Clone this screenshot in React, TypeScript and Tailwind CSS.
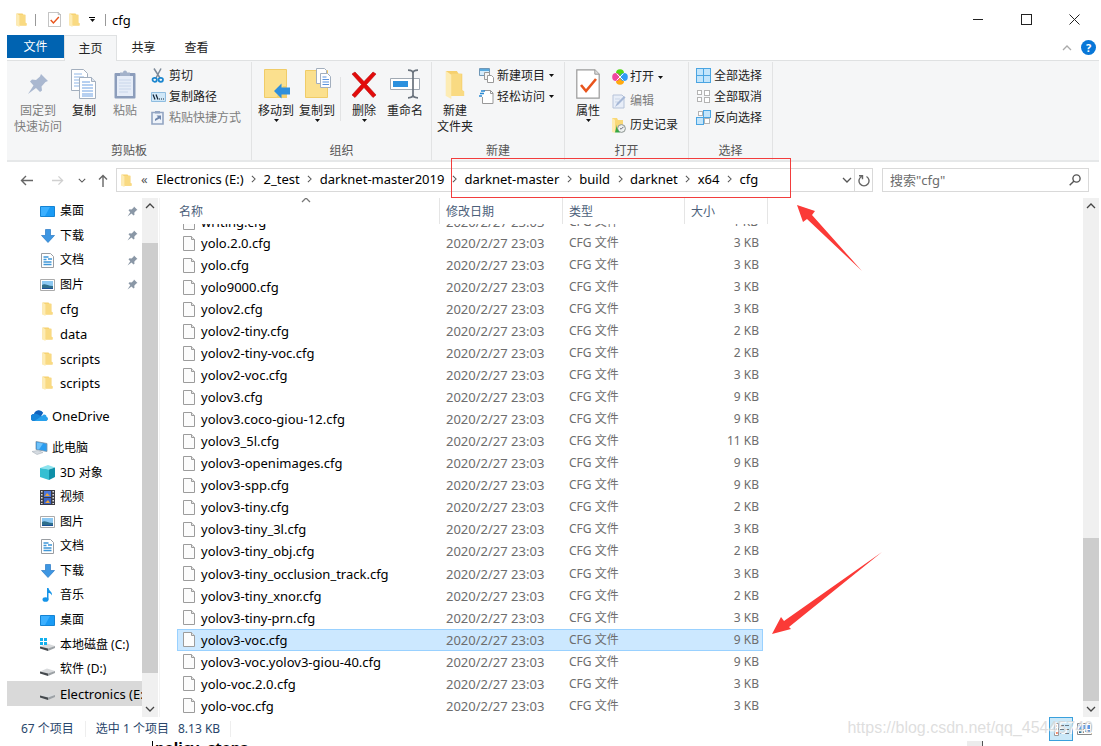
import React from 'react';

type IconProps = { className?: string };

function Folder({ className = 'w-[11px] h-[14px]' }: IconProps) {
  return (
    <svg className={className} viewBox="0 0 22 30" preserveAspectRatio="none">
      <path d="M1 1h12l2 3h4v17l2 1v5H9l-8 0z" fill="#f6d06e" />
      <path d="M7 4h11v17l3 1v5H7z" fill="#f9da82" />
      <path d="M1 1l6 4v25l-6-3z" fill="#fdecb4" />
    </svg>
  );
}

function CheckDoc({ className = 'w-[13px] h-[15px]' }: IconProps) {
  return (
    <svg className={className} viewBox="0 0 24 30" preserveAspectRatio="none">
      <path d="M.8.8h18l4.4 4.4v24H.8z" fill="#fff" stroke="#9a9a9a" strokeWidth="1.2" />
      <path d="M18.8.8v4.4h4.4" fill="#ddd" stroke="#9a9a9a" strokeWidth="1" />
      <path d="M5 16l5 6 10-12" fill="none" stroke="#e8541c" strokeWidth="2.6" />
    </svg>
  );
}

function Caret() {
  return (
    <svg className="w-[5px] h-[3px]" viewBox="0 0 5 3">
      <path d="M0 0h5L2.5 3z" fill="#111" />
    </svg>
  );
}

function Chevron({ className = 'w-[6px] h-[10px]', d = 'M1 1l4 4-4 4', box = '0 0 6 10' }: IconProps & { d?: string; box?: string }) {
  return (
    <svg className={className} viewBox={box} fill="none" stroke="currentColor" strokeWidth="1.3">
      <path d={d} />
    </svg>
  );
}

function Pin({ className = 'w-[12px] h-[12px]', color = '#8a97a6' }: IconProps & { color?: string }) {
  return (
    <svg className={className} viewBox="0 0 22 22">
      <path d="M14 1l7 7-2.500 1-4 4.500.5 4-2 1.500-4-4L1 21l5.500-8.500-3.500-4 2-2 4 .5L13 3.500z" fill={color} />
    </svg>
  );
}

function CopyPages({ className = 'w-[26px] h-[30px]' }: IconProps) {
  return (
    <svg className={className} viewBox="0 0 26 30">
      <path d="M.5.500h12l4 4v17H.5z" fill="#fff" stroke="#a3afbe" />
      <path d="M3 5h8M3 8h10M3 11h10M3 14h6M3 17h6" stroke="#8fb6e6" />
      <path d="M8.500 8.500h12l4 4v17h-16z" fill="#fff" stroke="#a3afbe" />
      <path d="M20.500 8.500v4h4" fill="#dde5ef" stroke="#a3afbe" />
      <path d="M11 13h8M11 16h11M11 19h11M11 22h11M11 25h11M11 27h11" stroke="#6fa1e2" />
    </svg>
  );
}

function Clipboard() {
  return (
    <svg className="w-[22px] h-[30px]" viewBox="0 0 22 30">
      <rect x=".5" y="4" width="21" height="25.500" rx="1" fill="#8c9dbb" />
      <path d="M3 7h16v20H3z" fill="#e6edf8" />
      <path d="M5 11h12M5 14h12M5 17h12M5 20h12M5 23h9" stroke="#c9d6ea" />
      <path d="M6 7V3.500h3a2 2 0 014 0h3V7z" fill="#a3b2ca" />
    </svg>
  );
}

function Scissors() {
  return (
    <svg className="w-[14px] h-[15px]" viewBox="0 0 14 15" fill="none">
      <path d="M3 .5l6 9.500M10 .5L5 10" stroke="#7d8a99" strokeWidth="1.500" />
      <ellipse cx="3.700" cy="11.800" rx="2.200" ry="2" stroke="#1a86cf" strokeWidth="1.700" />
      <ellipse cx="9.800" cy="11.800" rx="2.200" ry="2" stroke="#1a86cf" strokeWidth="1.700" />
    </svg>
  );
}

function CopyPath() {
  return (
    <svg className="w-[15px] h-[10px]" viewBox="0 0 15 10">
      <path d="M.5.500h14v9H.5z" fill="#cfe7f8" stroke="#8fbde0" />
      <path d="M2 2.500l2 5M5 2.500l2 5M8 7h1M10 7h1M12 7h1" stroke="#123" strokeWidth="1.200" />
    </svg>
  );
}

function PasteShortcut() {
  return (
    <svg className="w-[13px] h-[15px]" viewBox="0 0 13 15">
      <path d="M1 2.500h11v11.500H1z" fill="#eef3fa" stroke="#93a5c2" strokeWidth="1.600" />
      <path d="M4 1h5v2.500H4z" fill="#93a5c2" />
      <path d="M4 11V9l3-2-1.500-1.500H10v4.500L8.500 8.500z" fill="#7087ad" />
    </svg>
  );
}

function MoveTo() {
  return (
    <svg className="w-[28px] h-[32px]" viewBox="0 0 28 32">
      <path d="M2.500 1.500h22v28h-22z" fill="#fbe08e" stroke="#f0cc68" />
      <path d="M21 18h4v12H14z" fill="#f3cf6d" />
      <path d="M12 23l7.500-7.500v4H28v7h-8.500v4z" fill="#2f8fdc" />
    </svg>
  );
}

function CopyTo() {
  return (
    <svg className="w-[28px] h-[32px]" viewBox="0 0 28 32">
      <path d="M2.500 2.500h22v27h-22z" fill="#fbe08e" stroke="#f0cc68" />
      <path d="M13.500.500h8l2 2v13h-10z" fill="#fff" stroke="#a3afbe" />
      <path d="M17.500 5.500h7l3 3v11h-10z" fill="#fff" stroke="#a3afbe" />
      <path d="M19.500 9h4M19.500 11.500h6.500M19.500 14h6.500M19.500 16.500h6.500" stroke="#5b93dd" />
    </svg>
  );
}

function Delete() {
  return (
    <svg className="w-[26px] h-[27px]" viewBox="0 0 26 27">
      <path d="M1 3l3-2 9 9.500L22 1l3 2-9.500 10.500L25 24l-3 2.500-9-10-9 10L1 24l9.500-10.500z" fill="#e30b0b" stroke="#b80c0c" strokeWidth=".6" />
    </svg>
  );
}

function Rename() {
  return (
    <svg className="w-[30px] h-[30px]" viewBox="0 0 30 30">
      <path d="M.5 9.500h29v11H.5z" fill="#fff" stroke="#a0a9b3" />
      <path d="M3 12h15v6H3z" fill="#2b90de" />
      <path d="M18 1.200c3 0 5 .8 5 3v21.600c0 2.200-2 3-5 3M28 1.200c-3 0-5 .8-5 3v21.600c0 2.200 2 3 5 3" fill="none" stroke="#6a737d" strokeWidth="1.700" />
    </svg>
  );
}

function NewItem() {
  return (
    <svg className="w-[15px] h-[15px]" viewBox="0 0 15 15">
      <path d="M.5.500h10v7H.5z" fill="#d6ecfb" stroke="#6f97b6" />
      <path d="M1 1h9v2H1z" fill="#5aa9dd" />
      <path d="M5.500 4.500h5v7h-5z" fill="#f4f4f4" stroke="#999" />
      <path d="M8.500 7.500h4l2 2v5h-6z" fill="#fff" stroke="#999" />
    </svg>
  );
}

function EasyAccess() {
  return (
    <svg className="w-[15px] h-[15px]" viewBox="0 0 15 15">
      <path d="M4.500 1.500h7l2.500 2.500v10.500H3.500V8" fill="#fff" stroke="#999" />
      <path d="M11.500 1.500v3H14" fill="none" stroke="#999" />
      <path d="M2 2h4M1 4.500h4M0 7h3" stroke="#2c8bd4" strokeWidth="1.400" />
    </svg>
  );
}

function OpenIcon() {
  return (
    <svg className="w-4 h-4" viewBox="0 0 16 16">
      <ellipse cx="8" cy="4" rx="4" ry="3.800" fill="#53d616" />
      <ellipse cx="8" cy="12" rx="4" ry="3.800" fill="#ffa90f" />
      <ellipse cx="4" cy="8" rx="3.800" ry="4" fill="#f0469f" />
      <ellipse cx="12" cy="8" rx="3.800" ry="4" fill="#2f9cf4" />
      <path d="M4.500 4.500l7 7M11.500 4.500l-7 7" stroke="#fff" strokeWidth="1" />
    </svg>
  );
}

function EditIcon() {
  return (
    <svg className="w-[14px] h-[15px]" viewBox="0 0 14 15">
      <path d="M1 1h9l2 2v11H1z" fill="#e8eef8" stroke="#b6c3d9" />
      <path d="M3 5h5M3 8h3" stroke="#c9d5e7" />
      <path d="M3 13l2-4 7-7 1.500 1.500-7 7z" fill="#a6b8d6" />
    </svg>
  );
}

function HistoryIcon() {
  return (
    <svg className="w-[14px] h-[15px]" viewBox="0 0 14 15">
      <path d="M0 0h5l1 2h5v12H0z" fill="#f9d877" />
      <path d="M0 0l3 2v13l-3-1z" fill="#fdebb0" />
      <circle cx="9.500" cy="10.500" r="3.900" fill="#eef1f0" stroke="#8c9490" />
      <path d="M9.500 10.800l2-2M9.500 10.800H8" fill="none" stroke="#667" />
      <path d="M5 6.500C4.500 9.500 5.500 12 8 14.500H3z" fill="#35a845" />
    </svg>
  );
}

// x, y, side, filled
const squareSets: Record<string, [number, number, number, boolean][]> = {
  all: [
    [0, 0, 7, true],
    [7, 0, 7, true],
    [0, 7, 7, true],
    [7, 7, 7, true],
  ],
  none: [
    [1, 1, 4, false],
    [8, 1, 5, false],
    [1, 8, 4, false],
    [8, 8, 5, false],
  ],
  invert: [
    [2, 1, 4, false],
    [8, 8, 5, false],
    [7, 0, 7, true],
    [0, 7, 7, true],
  ],
};

function Squares({ kind }: { kind: string }) {
  return (
    <svg className="w-[15px] h-[15px]" viewBox="0 0 15 15">
      {squareSets[kind].map(([x, y, side, on]) => (
        <rect
          key={`${x}-${y}`}
          x={x + 0.5}
          y={y + 0.5}
          width={side}
          height={side}
          fill={on ? '#c3e5fb' : '#fff'}
          stroke={on ? '#4ba5e2' : '#b3b3b3'}
        />
      ))}
    </svg>
  );
}

function FileIcon() {
  return (
    <svg className="w-3 h-[15px] shrink-0" viewBox="0 0 12 15">
      <path d="M.5.500h8l3 3v11H.5z" fill="#fcfcfc" stroke="#9c9c9c" />
      <path d="M8.500.500v3h3" fill="#e4e4e4" stroke="#9c9c9c" />
    </svg>
  );
}

function Monitor() {
  return (
    <svg className="w-[15px] h-[11px]" viewBox="0 0 15 11">
      <path d="M.5.500h14v10H.5z" fill="#1a9bf5" stroke="#1583d3" />
      <path d="M1 1h9L5 10H1z" fill="#3cb0ff" />
    </svg>
  );
}

function Download() {
  return (
    <svg className="w-[14px] h-[14px]" viewBox="0 0 14 14">
      <path d="M4.500.500h5v6h4L7 13.500.500 6.500h4z" fill="#3d96e2" stroke="#2a78c4" strokeWidth=".7" />
    </svg>
  );
}

function Doc() {
  return (
    <svg className="w-[13px] h-[15px]" viewBox="0 0 13 15">
      <path d="M.5.500h9l3 3v11H.5z" fill="#fff" stroke="#999da2" />
      <path d="M2.500 4h5M7 6h4M2.500 6.500h3M2.500 9h8M2.500 11.500h8" stroke="#3f97d8" strokeWidth="1.300" />
    </svg>
  );
}

function Picture() {
  return (
    <svg className="w-[15px] h-[12px]" viewBox="0 0 15 12">
      <path d="M.5.500h14v11H.5z" fill="#fff" stroke="#ababab" />
      <path d="M2 2h11v8H2z" fill="#8cc8f2" />
      <path d="M2 6c3-2 5 1 11 1v3H2z" fill="#2f6f8c" />
      <path d="M2 9h11v1H2z" fill="#1a4f96" />
    </svg>
  );
}

function Cloud() {
  return (
    <svg className="w-[17px] h-[11px]" viewBox="0 0 17 11">
      <path d="M3.500 11A3.500 3.500 0 013 4a5 5 0 019.200-1.200L9 8z" fill="#0f62bd" />
      <path d="M3.500 11a3.500 3.500 0 01-.5-7c2.500-.8 4.500.5 6.500 2l5.500 1c2.500 1 2 4-1 4z" fill="#1685d9" />
      <path d="M3.500 11l8-5.500c1-1.800 4-1 4 1.200 2 .8 2 4.300-1.500 4.300z" fill="#28a1ec" />
    </svg>
  );
}

function ThisPc() {
  return (
    <svg className="w-[17px] h-[14px]" viewBox="0 0 17 14">
      <path d="M5 .500l11 2v8l-11-2z" fill="#2b9df0" stroke="#7f93a5" strokeWidth=".8" />
      <path d="M6 1.500l6 1-4 6-2-.5z" fill="#6ec2fa" />
      <path d="M1 10.500l6-1 5 2-6 2z" fill="#d5dbe1" stroke="#aab3bc" strokeWidth=".6" />
    </svg>
  );
}

function Cube() {
  return (
    <svg className="w-[15px] h-[15px]" viewBox="0 0 15 15">
      <path d="M0 3l8-3 7 2.500-6 2z" fill="#8de3ee" />
      <path d="M0 3l9 1.500V15l-9-3z" fill="#35bfd2" />
      <path d="M9 4.500l6-2V12l-6 3z" fill="#0f90a8" />
    </svg>
  );
}

function Video() {
  return (
    <svg className="w-[15px] h-[15px]" viewBox="0 0 15 15">
      <path d="M0 0h15v15H0z" fill="#3b3b44" />
      <path d="M4 1h7v6H4z" fill="#4c76dd" />
      <path d="M4 8h7v6H4z" fill="#3a63c8" />
      <path d="M5 6l2-3 3 3zM5 13l3-3 2 3z" fill="#efa53a" />
      <path d="M1.800 1v13M13.200 1v13" stroke="#e6e6e6" strokeWidth="1.500" strokeDasharray="1.500 1.500" />
    </svg>
  );
}

function Music() {
  return (
    <svg className="w-[11px] h-[14px]" viewBox="0 0 11 14">
      <ellipse cx="3.500" cy="11.500" rx="3" ry="2.300" fill="#1594e8" />
      <path d="M5 0h1.500c.5 3 4 3.500 3.500 7.500C9 5.500 7.500 5 6.500 5v6.500H5z" fill="#1594e8" />
    </svg>
  );
}

function Drive({ system }: { system?: boolean }) {
  return (
    <svg className="w-[15px] h-[13px]" viewBox="0 0 15 13">
      <path d="M0 8.500l7-3 8 2.500-7 3z" fill="#d8dadc" />
      <path d="M0 8.500l8 2V13l-8-2.500z" fill="#44494d" />
      <path d="M8 10.500l7-2.500v2L8 13z" fill="#9da2a6" />
      {system && <path d="M0 0h3v3H0zM4 0h3v3H4zM0 4h3v3H0zM4 4h3v3H4z" fill="#12b0ee" />}
    </svg>
  );
}

type BigProps = { icon: React.ReactNode; lines: string[]; width: string; muted?: boolean; caret?: boolean };

function BigButton({ icon, lines, width, muted, caret }: BigProps) {
  return (
    <button className={`flex flex-col items-center shrink-0 ${width} ${muted ? 'text-[#7d7d7d]' : 'text-[#222]'}`}>
      <span className="h-[38px] flex items-center justify-center">{icon}</span>
      {lines.map((line) => (
        <span key={line} className="leading-4 whitespace-nowrap">
          {line}
        </span>
      ))}
      {caret && <Caret />}
    </button>
  );
}

type SmallProps = { icon: React.ReactNode; label: string; muted?: boolean; caret?: boolean; tall?: boolean };

function SmallButton({ icon, label, muted, caret, tall }: SmallProps) {
  return (
    <button className={`flex items-center whitespace-nowrap ${tall ? 'h-6' : 'h-[21px]'} ${muted ? 'text-[#7d7d7d]' : 'text-[#222]'}`}>
      <span className="w-[18px] flex shrink-0">{icon}</span>
      <span className="mr-1">{label}</span>
      {caret && <Caret />}
    </button>
  );
}

function Group({ title, width, inset = 'pl-[3px]', children }: { title: string; width: string; inset?: string; children: React.ReactNode }) {
  return (
    <section className={`flex flex-col shrink-0 border-r border-[#e2e3e4] ${width}`}>
      <div className={`flex flex-1 pt-[3px] ${inset}`}>{children}</div>
      <h2 className="h-[18px] leading-[18px] text-center text-[#555]">{title}</h2>
    </section>
  );
}

type NavItem = { icon: React.ReactNode; label: string; top?: boolean; pinned?: boolean; latin?: boolean; active?: boolean };

const navItems: NavItem[] = [
  { icon: <Monitor />, label: '桌面', pinned: true },
  { icon: <Download />, label: '下载', pinned: true },
  { icon: <Doc />, label: '文档', pinned: true },
  { icon: <Picture />, label: '图片', pinned: true },
  { icon: <Folder />, label: 'cfg', latin: true },
  { icon: <Folder />, label: 'data', latin: true },
  { icon: <Folder />, label: 'scripts', latin: true },
  { icon: <Folder />, label: 'scripts', latin: true },
  { icon: <Cloud />, label: 'OneDrive', top: true, latin: true },
  { icon: <ThisPc />, label: '此电脑', top: true },
  { icon: <Cube />, label: '3D 对象' },
  { icon: <Video />, label: '视频' },
  { icon: <Picture />, label: '图片' },
  { icon: <Doc />, label: '文档' },
  { icon: <Download />, label: '下载' },
  { icon: <Music />, label: '音乐' },
  { icon: <Monitor />, label: '桌面' },
  { icon: <Drive system />, label: '本地磁盘 (C:)' },
  { icon: <Drive />, label: '软件 (D:)' },
  { icon: <Drive />, label: 'Electronics (E:)', latin: true, active: true },
];

const files: [string, number][] = [
  ['yolo.2.0.cfg', 3],
  ['yolo.cfg', 3],
  ['yolo9000.cfg', 3],
  ['yolov2.cfg', 3],
  ['yolov2-tiny.cfg', 2],
  ['yolov2-tiny-voc.cfg', 2],
  ['yolov2-voc.cfg', 3],
  ['yolov3.cfg', 9],
  ['yolov3.coco-giou-12.cfg', 9],
  ['yolov3_5l.cfg', 11],
  ['yolov3-openimages.cfg', 9],
  ['yolov3-spp.cfg', 9],
  ['yolov3-tiny.cfg', 2],
  ['yolov3-tiny_3l.cfg', 3],
  ['yolov3-tiny_obj.cfg', 2],
  ['yolov3-tiny_occlusion_track.cfg', 3],
  ['yolov3-tiny_xnor.cfg', 2],
  ['yolov3-tiny-prn.cfg', 3],
  ['yolov3-voc.cfg', 9],
  ['yolov3-voc.yolov3-giou-40.cfg', 9],
  ['yolo-voc.2.0.cfg', 3],
  ['yolo-voc.cfg', 3],
];

const crumbs = ['Electronics (E:)', '2_test', 'darknet-master2019', 'darknet-master', 'build', 'darknet', 'x64', 'cfg'];

const up = 'M1 6l4-4 4 4';
const down = 'M1 2l4 4 4-4';

function TitleBar() {
  return (
    <header className="flex items-center h-[35px] pt-1 pr-px shrink-0">
      <div className="flex items-center pl-[9px]">
        <Folder />
        <span className="w-px h-3 bg-[#999] mx-2" />
        <button aria-label="属性" className="ml-1">
          <CheckDoc />
        </button>
        <button aria-label="新建文件夹" className="ml-2">
          <Folder />
        </button>
        <button aria-label="自定义快速访问工具栏" className="ml-[9px] mr-[10px] flex flex-col items-center gap-px text-black">
          <span className="w-[6px] h-px bg-current" />
          <Caret />
        </button>
        <span className="w-px h-3 bg-[#999]" />
      </div>
      <h1 className="pl-[6px] text-[13px] text-black">cfg</h1>
      <div className="ml-auto flex text-[#222]">
        <button aria-label="最小化" className="w-12 h-8 flex items-center justify-center">
          <span className="w-[10px] h-px bg-current" />
        </button>
        <button aria-label="最大化" className="w-12 h-8 flex items-center justify-center">
          <span className="w-[11px] h-[11px] border border-current" />
        </button>
        <button aria-label="关闭" className="w-12 h-8 flex items-center justify-center">
          <svg className="w-[11px] h-[11px]" viewBox="0 0 11 11" stroke="currentColor">
            <path d="M.5.500l10 10M10.500.500l-10 10" />
          </svg>
        </button>
      </div>
    </header>
  );
}

function Tabs() {
  return (
    <div className="flex items-start h-[26px] shrink-0 border-b border-[#dfe1e2]">
      <button className="w-[57px] h-[23px] bg-[#0063b1] text-white">文件</button>
      <button className="w-[53px] h-[26px] bg-[#f5f6f7] border border-b-0 border-[#dfe1e2] text-[#222]">主页</button>
      <button className="w-[53px] h-[25px] text-[#222]">共享</button>
      <button className="w-[53px] h-[25px] text-[#222]">查看</button>
      <div className="ml-auto flex items-center gap-[9px] h-[25px] pr-[3px]">
        <button aria-label="最小化功能区" className="text-[#aaa]">
          <Chevron className="w-[10px] h-[8px]" box="0 0 10 8" d={up} />
        </button>
        <button className="w-[15px] h-[15px] rounded-full bg-[#0877d8] text-white text-[11px] leading-[15px] font-bold">?</button>
      </div>
    </div>
  );
}

function Ribbon() {
  return (
    <div className="flex h-[101px] shrink-0 bg-[#f5f6f7] border-b-2 border-[#e6e8e9] pt-px">
      <Group title="剪贴板" width="w-[245px]" inset="pl-[6px]">
        <BigButton icon={<Pin className="w-[22px] h-[22px]" color="#aab8d0" />} lines={['固定到', '快速访问']} width="w-[50px]" muted />
        <BigButton icon={<CopyPages />} lines={['复制']} width="w-[42px]" />
        <BigButton icon={<Clipboard />} lines={['粘贴']} width="w-10" muted />
        <div className="pl-[6px]">
          <SmallButton icon={<Scissors />} label="剪切" />
          <SmallButton icon={<CopyPath />} label="复制路径" />
          <SmallButton icon={<PasteShortcut />} label="粘贴快捷方式" muted />
        </div>
      </Group>
      <Group title="组织" width="w-[180px]">
        <BigButton icon={<MoveTo />} lines={['移动到']} width="w-[42px]" caret />
        <BigButton icon={<CopyTo />} lines={['复制到']} width="w-10" caret />
        <span className="w-px h-11 mt-3 mx-[3px] bg-[#e2e3e4]" />
        <BigButton icon={<Delete />} lines={['删除']} width="w-10" caret />
        <BigButton icon={<Rename />} lines={['重命名']} width="w-[42px]" />
      </Group>
      <Group title="新建" width="w-[133px]">
        <BigButton icon={<Folder className="w-[20px] h-[29px]" />} lines={['新建', '文件夹']} width="w-10" />
        <div className="pl-1">
          <SmallButton icon={<NewItem />} label="新建项目" caret />
          <SmallButton icon={<EasyAccess />} label="轻松访问" caret />
        </div>
      </Group>
      <Group title="打开" width="w-[124px]">
        <BigButton icon={<CheckDoc className="w-[24px] h-[30px]" />} lines={['属性']} width="w-10" caret />
        <div className="pl-1">
          <SmallButton icon={<OpenIcon />} label="打开" caret tall />
          <SmallButton icon={<EditIcon />} label="编辑" muted tall />
          <SmallButton icon={<HistoryIcon />} label="历史记录" tall />
        </div>
      </Group>
      <Group title="选择" width="w-[84px]" inset="pl-[7px]">
        <div>
          <SmallButton icon={<Squares kind="all" />} label="全部选择" />
          <SmallButton icon={<Squares kind="none" />} label="全部取消" />
          <SmallButton icon={<Squares kind="invert" />} label="反向选择" />
        </div>
      </Group>
    </div>
  );
}

function AddressBar() {
  return (
    <div className="flex items-center h-9 shrink-0 pl-[13px] pr-[10px] text-[13px] text-[#555]">
      <button aria-label="后退">
        <svg className="w-[13px] h-[11px]" viewBox="0 0 13 11" fill="none" stroke="#666" strokeWidth="1.400">
          <path d="M6 1L1.500 5.500 6 10M1.500 5.500H13" />
        </svg>
      </button>
      <button aria-label="前进" className="ml-[19px]">
        <svg className="w-[12px] h-[11px]" viewBox="0 0 13 11" fill="none" stroke="#d0d0d0" strokeWidth="1.400">
          <path d="M7 1l4.500 4.500L7 10M11.500 5.500H0" />
        </svg>
      </button>
      <button aria-label="最近浏览的位置" className="ml-[14px]">
        <Chevron className="w-2 h-[7px]" box="0 0 10 8" d={down} />
      </button>
      <button aria-label="上移" className="ml-3">
        <svg className="w-[10px] h-[13px]" viewBox="0 0 10 13" fill="none" stroke="#666" strokeWidth="1.400">
          <path d="M1 5.500l4-4 4 4M5 1.500V13" />
        </svg>
      </button>
      <div className="ml-2 flex flex-1 items-center h-6 border border-[#d9d9d9] pl-1">
        <Folder className="w-[11px] h-[13px]" />
        <span className="w-[24px] pl-[9px] pb-[2px]">«</span>
        <nav className="flex items-center flex-1 pb-[2px]">
          {crumbs.map((name, i) => (
            <React.Fragment key={name}>
              {i > 0 && (
                <span className="w-5 flex justify-center">
                  <Chevron className="w-[5px] h-[8px]" />
                </span>
              )}
              <button className="text-black whitespace-nowrap">{name}</button>
            </React.Fragment>
          ))}
        </nav>
        <button aria-label="以前的位置" className="mr-[2px]">
          <Chevron className="w-[10px] h-[8px]" box="0 0 10 8" d={down} />
        </button>
        <button aria-label="刷新" className="w-[18px] h-full flex items-center justify-center border-l border-[#d9d9d9]">
          <svg className="w-[12px] h-[13px]" viewBox="0 0 12 13" fill="none" stroke="#666" strokeWidth="1.400">
            <path d="M8.500 2.500a5 5 0 11-5 0M1 1.700h3.500v3.500" />
          </svg>
        </button>
      </div>
      <label className="ml-[9px] flex items-center w-[207px] h-6 border border-[#d9d9d9] px-[7px]">
        <input aria-label="搜索" placeholder={'搜索"cfg"'} className="flex-1 min-w-0 outline-none text-[13px] placeholder:text-[#6d6d6d]" />
        <svg className="w-[12px] h-[12px]" viewBox="0 0 12 12" fill="none" stroke="#555" strokeWidth="1.400">
          <circle cx="7.500" cy="4.500" r="3.600" />
          <path d="M5 7L.700 11.300" />
        </svg>
      </label>
    </div>
  );
}

// The two spacers keep the thumb at its place along the track.
function ScrollBar({ before, thumb, after }: { before: string; thumb: string; after: string }) {
  return (
    <div className="w-4 shrink-0 flex flex-col items-center bg-[#f0f0f0] text-[#444]">
      <button aria-label="向上滚动" className="h-4 flex items-center">
        <Chevron className="w-[10px] h-[8px]" box="0 0 10 8" d={up} />
      </button>
      <div className={before} />
      <div className={`w-full bg-[#cdcdcd] ${thumb}`} />
      <div className={after} />
      <button aria-label="向下滚动" className="h-4 flex items-center">
        <Chevron className="w-[10px] h-[8px]" box="0 0 10 8" d={down} />
      </button>
    </div>
  );
}

function Sidebar() {
  return (
    <nav className="w-[135px] shrink-0 flex flex-col pt-px pb-[11px] overflow-hidden">
      {navItems.map((item, i) => (
        <a
          key={i}
          href="#"
          className={`flex flex-1 items-center whitespace-nowrap text-black ${item.top ? 'pl-6 mt-2' : 'pl-[33px]'} ${item.latin ? 'text-[13px]' : ''} ${item.active ? 'bg-[#d9d9d9]' : ''}`}
        >
          <span className={`flex justify-center shrink-0 ${item.top ? 'w-[17px] mr-1' : 'w-[15px] mr-[5px]'}`}>{item.icon}</span>
          {item.label}
          {item.pinned && (
            <span className="ml-auto mr-1">
              <Pin className="w-[11px] h-[11px]" />
            </span>
          )}
        </a>
      ))}
    </nav>
  );
}

function FileTable() {
  const head = 'h-[26px] p-0 pt-[2px] pl-[6px] text-left font-normal border-r border-[#e5e5e5]';
  return (
    <table className="w-[591px] shrink-0 table-fixed border-separate border-spacing-0">
      <colgroup>
        <col className="w-[263px]" />
        <col className="w-[123px]" />
        <col className="w-[122px]" />
        <col className="w-[78px]" />
        <col className="w-[5px]" />
      </colgroup>
      <thead className="text-[#4c607a]">
        <tr>
          <th className="h-[26px] p-0 pt-[2px] pl-[2px] text-left font-normal border-r border-[#e5e5e5]">
            <div className="relative">
              名称
              <span className="absolute left-[122px] -top-2 text-[#777]">
                <Chevron className="w-[10px] h-[8px]" box="0 0 10 8" d={up} />
              </span>
            </div>
          </th>
          <th className={head}>修改日期</th>
          <th className={head}>类型</th>
          <th className="h-[26px] p-0 pt-[2px] pl-[6px] text-left font-normal">大小</th>
          <th className="border-r border-[#e5e5e5]" />
        </tr>
      </thead>
      <tbody className="text-[#6d6d6d]">
        {/* top row is scrolled half out of view */}
        <tr className="leading-5">
          <td className="p-0">
            <div className="h-2 flex items-end overflow-hidden pl-[6px] text-[13px] text-black">
              <span className="h-5 flex items-center gap-[6px]">
                <FileIcon />
                writing.cfg
              </span>
            </div>
          </td>
          <td className="p-0">
            <div className="h-2 flex items-end overflow-hidden pl-[6px] text-[13px]">2020/2/27 23:03</div>
          </td>
          <td className="p-0">
            <div className="h-2 flex items-end overflow-hidden pl-[6px]">CFG 文件</div>
          </td>
          <td className="p-0">
            <div className="h-2 flex items-end justify-end overflow-hidden pr-[5px]">1 KB</div>
          </td>
          <td className="p-0" />
        </tr>
        {files.map(([name, size]) => {
          const selected = name === 'yolov3-voc.cfg';
          const cell = selected ? 'border-y border-[#99d1ff] bg-[#cce8ff]' : 'border-y border-transparent';
          return (
            <tr key={name} className="leading-5">
              <td className={`p-0 ${cell} ${selected ? 'border-l' : ''}`}>
                <div className={`flex items-center gap-[6px] text-[13px] text-black ${selected ? 'pl-[5px]' : 'pl-[6px]'}`}>
                  <FileIcon />
                  {name}
                </div>
              </td>
              <td className={`p-0 pl-[6px] text-[13px] ${cell}`}>2020/2/27 23:03</td>
              <td className={`p-0 pl-[6px] ${cell}`}>CFG 文件</td>
              <td className={`p-0 text-right ${cell} ${selected ? 'border-r pr-[3px]' : 'pr-1'}`}>{size} KB</td>
              <td className="p-0" />
            </tr>
          );
        })}
      </tbody>
    </table>
  );
}

function StatusBar() {
  return (
    <footer className="flex items-center h-6 shrink-0 pl-[14px] text-[#29466b]">
      <span className="pr-[11px] border-r border-[#eee]">67 个项目</span>
      <span className="pl-[10px]">选中 1 个项目</span>
      <span className="pl-[9px] pr-[10px] border-r border-[#eee]">8.13 KB</span>
      <div className="ml-auto flex items-center gap-1 pr-[7px]">
        <button aria-label="详细信息" className="w-6 h-6 flex items-center justify-center border border-[#3aa0dc] bg-[#cbe8f8]">
          <svg className="w-[15px] h-[13px]" viewBox="0 0 15 13">
            <path d="M.5.500h4v12h-4z" fill="#fff" stroke="#9a9a9a" />
            <path d="M2 3h1M2 6h1" stroke="#567" />
            <path d="M2 10h1.500" stroke="#d33" strokeWidth="2" />
            <path d="M6 2.500h4M11 2.500h4M6 6.500h4M11 6.500h4M6 10.500h4M11 10.500h4" stroke="#6d7a86" />
          </svg>
        </button>
        <button aria-label="大图标">
          <svg className="w-[15px] h-[12px]" viewBox="0 0 15 12">
            <path d="M.5.500h14v11H.5z" fill="#fff" stroke="#8b8b8b" />
            <path d="M2 2h11v4H2z" fill="#5a9be6" />
            <path d="M2 6h5v4H2z" fill="#2d5d74" />
            <path d="M8 8h5" stroke="#3b6fb5" strokeWidth="1.500" />
          </svg>
        </button>
      </div>
    </footer>
  );
}

function Annotations() {
  return (
    <svg className="absolute inset-0 w-full h-full pointer-events-none" fill="#fb3a37">
      <rect x="451.500" y="158.500" width="339" height="39" fill="none" stroke="#f23d3d" />
      <path d="M797 205l18 6-3 4 50 56-55-52-4 3z" />
      <path d="M772 634l9-17 3 4 98-69-93 75 2 2z" />
    </svg>
  );
}

export default function App() {
  return (
    <div className="relative h-screen flex flex-col overflow-hidden bg-white pl-[7px] pr-[2px] text-[12px] leading-4 font-['Noto_Sans','Noto_Sans_CJK_SC',sans-serif]">
      <TitleBar />
      <Tabs />
      <Ribbon />
      <AddressBar />
      <main className="flex flex-1 min-h-0">
        <Sidebar />
        <ScrollBar before="h-[29px]" thumb="flex-1" after="h-7" />
        <div className="flex flex-1 min-w-0 ml-px pl-[17px] border-l border-[#f3f3f3] overflow-hidden">
          <FileTable />
        </div>
        <ScrollBar before="flex-1" thumb="h-[163px]" after="h-0" />
      </main>
      <StatusBar />
      <div className="flex h-[5px] shrink-0 overflow-hidden pl-[145px]">
        <span className="pl-[2px] border-l border-black text-[15px] leading-3 font-bold text-black">policy=steps</span>
        <span className="ml-auto mr-[116px] w-4 bg-[#ececec] border-r border-[#555]" />
      </div>
      <p className="absolute right-2 bottom-2 text-base leading-5 text-[#d6d6d6]/80 [text-shadow:1px_1px_0_#fff] font-['Liberation_Sans',sans-serif]">
        https://blog.csdn.net/qq_45445740
      </p>
      <Annotations />
    </div>
  );
}
